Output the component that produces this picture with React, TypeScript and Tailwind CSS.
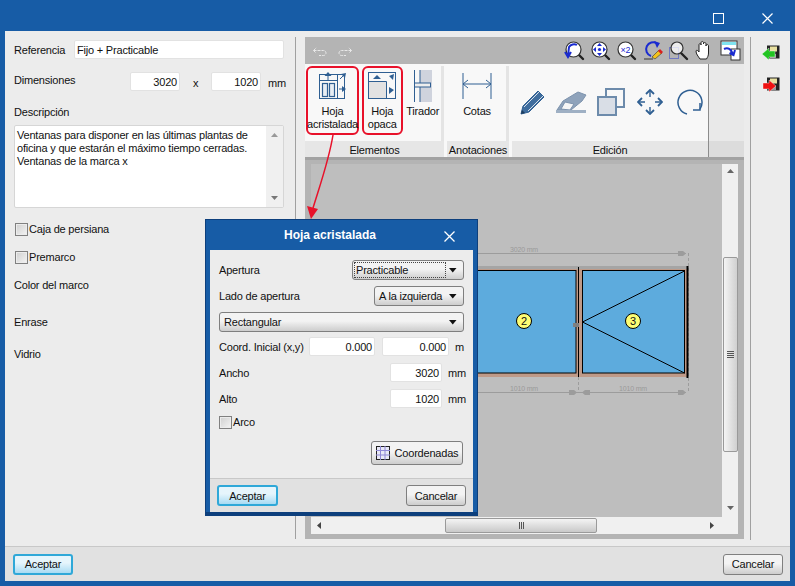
import type { ReactNode } from "react";

const font = "font-['Liberation_Sans',Arial,sans-serif] text-[11px] tracking-[-0.2px] leading-[14px] text-[#111]";

function Input({ value, className }: { value: string; className: string }) {
  return (
    <div className={"h-[19px] shrink-0 bg-white rounded-[2px] border border-[#e2e2e2] flex items-center px-[2px] " + className}>
      {value}
    </div>
  );
}

function Check({ label, className = "" }: { label: string; className?: string }) {
  return (
    <div className={"flex items-center gap-[1px] h-[14px] " + className}>
      <div className="w-[13px] h-[13px] border border-[#808080] bg-gradient-to-br from-[#cfcfcf] to-[#f4f4f4] outline outline-1 -outline-offset-2 outline-[#ececec]" />
      <span>{label}</span>
    </div>
  );
}

function Combo({ value, className, focus }: { value: string; className: string; focus?: boolean }) {
  return (
    <div className={"h-[20px] rounded-[3px] border border-[#7f7f7f] bg-gradient-to-b from-[#f3f3f3] from-45% to-[#cdcdcd] flex items-center pr-[6px] justify-between " + (focus ? "pl-[1px] " : "pl-[3px] ") + className}>
      <span className={focus ? "w-[92px] h-[16px] leading-[14px] pl-[1px] border border-dotted border-[#444]" : "pl-[1px] whitespace-nowrap"}>{value}</span>
      <svg width="8" height="5" viewBox="0 0 8 5"><path d="M0 0h7.5L3.75 4.5z" fill="#111" /></svg>
    </div>
  );
}

function Btn({ children, className, primary }: { children: ReactNode; className: string; primary?: boolean }) {
  return (
    <div
      className={
        "flex items-center justify-center rounded-[3px] " +
        (primary
          ? "border-2 border-[#2fa8d8] bg-gradient-to-b from-[#e6f5fc] from-40% to-[#a8dbf3] "
          : "border border-[#7f7f7f] bg-gradient-to-b from-[#f3f3f3] from-45% to-[#cdcdcd] ") +
        className
      }
    >
      {children}
    </div>
  );
}

function RibbonBtn({ icon, label, className = "" }: { icon: ReactNode; label: ReactNode; className?: string }) {
  return (
    <div className={"h-[69px] flex flex-col items-center text-center " + className}>
      <div className="h-[35px] flex items-center justify-center">{icon}</div>
      <div className="pt-[2px] leading-[13px]">{label}</div>
    </div>
  );
}

// small magnifier used by most of the toolbar icons
function Lens({ children }: { children?: ReactNode }) {
  return (
    <svg width="21" height="21" viewBox="0 0 21 21">
      <path d="M14 14l5 5" stroke="#222" strokeWidth="2.4" strokeLinecap="round" />
      <circle cx="9.5" cy="9.5" r="7.5" fill="#fff" stroke="#333" strokeWidth="1.2" />
      {children}
    </svg>
  );
}

function Toolbar() {
  return (
    <div className="h-[27px] flex items-center pl-[7px] pr-[3px]">
      <svg width="16" height="12" viewBox="0 0 16 12" fill="none" stroke="#e8e8e8" strokeWidth="1">
        <path d="M1.5 5.5h10a2.5 2.5 0 010 5H7M1.5 5.5l3-3M1.5 5.5l2 2" strokeDasharray="3 1" />
      </svg>
      <svg className="ml-[9px]" width="16" height="12" viewBox="0 0 16 12" fill="none" stroke="#e8e8e8" strokeWidth="1">
        <path d="M14.5 5.5h-10a2.5 2.5 0 000 5H9M14.5 5.5l-3-3M14.5 5.5l-2 2" strokeDasharray="3 1" />
      </svg>
      <div className="flex-1" />
      <div className="flex items-center gap-[5px]">
        <Lens><path d="M13 5a6 6 0 00-8 2l-1 9M1 12l3 5 3-5" fill="none" stroke="#1a2bd0" strokeWidth="2" /></Lens>
        <Lens><path d="M9.5 3l2.5 3H7zM9.5 16l2.5-3H7zM3 9.5l3-2.5v5zM16 9.5l-3-2.5v5z" fill="#1a2bd0" /><circle cx="9.5" cy="9.5" r="1.6" fill="#1a2bd0" /></Lens>
        <Lens><text x="9.5" y="13" textAnchor="middle" fontSize="9" fontFamily="Liberation Sans" fill="#1a2bd0">×2</text></Lens>
        <svg width="21" height="21" viewBox="0 0 21 21">
          <path d="M15 3.5A7 7 0 1 0 9 16" fill="none" stroke="#1a2bd0" strokeWidth="2" />
          <path d="M12 1l6 2-3 5z" fill="#1a2bd0" />
          <path d="M2 19h9" stroke="#333" />
          <path d="M10 17l7-7 3 3-7 6z" fill="#f3c21c" stroke="#333" strokeWidth="0.6" />
          <path d="M16 11l2-2 3 3-2 2z" fill="#d92020" />
        </svg>
        <svg width="21" height="21" viewBox="0 0 21 21">
          <path d="M1.5 7.5h9v11h-9z" fill="none" stroke="#2c3fd0" strokeDasharray="1 1" />
          <path d="M13 13l6 6" stroke="#222" strokeWidth="2.4" strokeLinecap="round" />
          <circle cx="9" cy="8" r="6" fill="#fff" fillOpacity="0.75" stroke="#333" strokeWidth="1.2" />
        </svg>
        <svg width="21" height="21" viewBox="0 0 21 21">
          <path d="M6 19c-2-3-4-5-4-8 0-1 2-1 3 1V5c0-2 2-2 2 0V3c0-2 2.5-2 2.5 0v1c0-2 2.5-2 2.5 0v2c0-2 2.5-2 2.5 0v7c0 3-1 4-2 6z" fill="#fff" stroke="#222" strokeWidth="1" />
        </svg>
        <svg width="21" height="21" viewBox="0 0 21 21">
          <rect x="1" y="1" width="16" height="14" fill="#fff" stroke="#333" />
          <rect x="2" y="2" width="14" height="3" fill="#7fe3f0" />
          <rect x="11" y="9" width="9" height="11" fill="#fff" stroke="#333" />
          <path d="M4 9c4-2 7 0 9 5M15 10l-1.5 5-4-2" fill="none" stroke="#1a2bd0" strokeWidth="2" />
        </svg>
      </div>
    </div>
  );
}

function Ribbon() {
  const blue = "#2f5f92";
  return (
    <div className="h-[96px] flex border-b-[3px] border-[#a2a2a2]">
      <div className="w-[404px] bg-[#f8f8f8] border-r border-[#8c8c8c] flex flex-col">
        <div className="h-[77px] flex pt-[2px]">
          <div className="w-[139px] flex pl-[1px] border-r-[3px] border-[#e4e4e4]">
            <RibbonBtn
              className="w-[53px] border-2 border-[#e8112a] rounded-[6px]"
              label={<>Hoja<br />acristalada</>}
              icon={
                <svg width="28" height="27" viewBox="0 0 28 27" fill="none" stroke={blue}>
                  <rect x="0.5" y="2.5" width="25" height="24" strokeWidth="1" />
                  <path d="M0 8.5h18M18.5 2v25" strokeWidth="1" />
                  <rect x="3.5" y="11.5" width="5" height="13" fill="#e8eef4" strokeWidth="1.2" />
                  <rect x="10.5" y="11.5" width="5" height="13" fill="#e8eef4" strokeWidth="1.2" />
                  <path d="M9 0l3.5 4h-7zM27 17l-4 3v-6zM27 1l-1 5-4-4z" fill={blue} stroke="none" />
                  <path d="M9 3v5M20 17h5M21 7l4-4" strokeWidth="1" />
                </svg>
              }
            />
            <RibbonBtn
              className="w-[42px] ml-[3px] border-2 border-[#e8112a] rounded-[6px]"
              label={<>Hoja<br />opaca</>}
              icon={
                <svg width="28" height="27" viewBox="0 0 28 27" fill="none" stroke={blue}>
                  <rect x="0.5" y="0.5" width="27" height="26" strokeWidth="1" />
                  <rect x="1" y="10" width="17" height="16" fill="#e2e2e2" stroke="none" />
                  <path d="M0 9.5h18.5V27" strokeWidth="1" />
                  <path d="M9 3l4 4H5zM26 18l-5 4v-7zM26 2l-1 6-4-4z" fill={blue} stroke="none" />
                </svg>
              }
            />
            <RibbonBtn
              className="w-[38px] ml-[2px] pt-[2px]"
              label="Tirador"
              icon={
                <svg width="21" height="32" viewBox="0 0 21 32">
                  <rect x="8" y="0" width="12" height="32" fill="#cfd3dd" />
                  <path d="M2.5 0v32M8 0v32" stroke="#2f5f92" strokeWidth="1" />
                  <rect x="2.5" y="13" width="16" height="4" fill="#eee" stroke="#2f5f92" />
                </svg>
              }
            />
          </div>
          <div className="w-[65px] flex justify-center border-r-[3px] border-[#e4e4e4]">
            <RibbonBtn
              className="w-full pt-[2px] pl-[4px]"
              label="Cotas"
              icon={
                <svg width="30" height="26" viewBox="0 0 30 26" fill="none" stroke={blue} strokeWidth="1">
                  <path d="M1 0v26M29 0v26M1 11h28M6 7l-5 4 5 4M24 7l5 4-5 4" />
                </svg>
              }
            />
          </div>
          <div className="flex-1 flex items-center pl-[11px] pb-[3px]">
            <svg width="26" height="26" viewBox="0 0 26 26">
              <path d="M1 25l2-8L18 2l6 6L9 23z" fill="#3f6d9e" stroke="#2f5f92" />
              <path d="M4 18l15-15M8 22L23 7" stroke="#fff" strokeWidth="0.8" />
              <path d="M1 25l1-4 3 3z" fill="#1d3d5f" />
            </svg>
            <svg className="ml-[10px]" width="31" height="22" viewBox="0 0 31 22">
              <path d="M1 19l6-9L22 1l8 3-4 6-11 9z" fill="#8fa3bb" stroke="#7d93ad" />
              <path d="M5 18l4-7 9 2-4 6z" fill="#f6f6f6" stroke="#7d93ad" />
              <rect x="0" y="19" width="30" height="3" fill="#9fb0c4" />
            </svg>
            <svg className="ml-[10px]" width="28" height="28" viewBox="0 0 28 28" fill="none" stroke="#6d8bab" strokeWidth="2">
              <rect x="9" y="1" width="18" height="18" />
              <rect x="1" y="9" width="18" height="18" fill="#d9dee6" />
            </svg>
            <svg className="ml-[12px]" width="26" height="26" viewBox="0 0 26 26" fill="none" stroke={blue} strokeWidth="1.4">
              <path d="M13 1v7M13 18v7M1 13h7M18 13h7" />
              <path d="M9 5l4-4 4 4M9 21l4 4 4-4M5 9l-4 4 4 4M21 9l4 4-4 4" strokeWidth="1.8" />
            </svg>
            <svg className="ml-[13px]" width="27" height="26" viewBox="0 0 27 26" fill="none" stroke={blue} strokeWidth="1.5">
              <path d="M11 25A12 12 0 1 1 24 20" />
              <path d="M24 14v7h-7" />
            </svg>
          </div>
        </div>
        <div className="h-[16px] flex text-center leading-[18px]">
          <div className="w-[139px] bg-[#e6e6e6] mr-[3px]">Elementos</div>
          <div className="w-[62px] bg-[#e6e6e6] mr-[3px] whitespace-nowrap">Anotaciones</div>
          <div className="flex-1 bg-[#e6e6e6]">Edición</div>
        </div>
      </div>
      <div className="flex-1 bg-[#e9e9e9] flex flex-col justify-end">
        <div className="h-[16px] bg-[#dcdcdc]" />
      </div>
    </div>
  );
}

function Canvas() {
  const dim = "#9c9c9c";
  return (
    <svg className="flex-1 block min-w-0 bg-[#bebebe]" width="411" height="353" viewBox="311 164 411 353">
      <g stroke={dim} fill="none">
        <path d="M372 253.5h314M372 392.5h314" />
        <path d="M578.5 377v15M688.5 253v139" strokeDasharray="3 2" />
      </g>
      <g fill={dim}>
        <path d="M678 251h5l3 2.5-3 2.5h-5zM569 390h5l3 2.5-3 2.5h-5zM678 390h5l3 2.5-3 2.5h-5zM590 390h-5l-3 2.5 3 2.5h5z" />
      </g>
      <g fontFamily="Liberation Sans" fontSize="7" fill="#9a9a9a" textAnchor="middle">
        <text x="524" y="252">3020 mm</text>
        <text x="524" y="391">1010 mm</text>
        <text x="633" y="391">1010 mm</text>
      </g>
      <rect x="372" y="266" width="316" height="111" fill="#bf9a88" />
      <rect x="372" y="266" width="316" height="3" fill="#a5a5a5" />
      <rect x="372" y="270.5" width="204" height="102.5" fill="#5dabdd" stroke="#000" />
      <rect x="582.5" y="270.5" width="102" height="102.5" fill="#5dabdd" stroke="#000" />
      <path d="M578.5 267v110" stroke="#000" />
      <path d="M687.5 266v112" stroke="#000" strokeWidth="2" />
      <path d="M582.5 322L684.5 271M582.5 322L684.5 373" stroke="#000" />
      <rect x="573" y="323" width="6" height="4" fill="#808080" />
      <circle cx="524" cy="321" r="7.5" fill="#fdfd74" stroke="#000" />
      <circle cx="633" cy="321" r="7.5" fill="#fdfd74" stroke="#000" />
      <g fontFamily="Liberation Sans" fontSize="11" fill="#111" textAnchor="middle">
        <text x="524" y="325">2</text>
        <text x="633" y="325">3</text>
      </g>
    </svg>
  );
}

function ScrollV() {
  return (
    <div className="w-[16px] bg-[#f0f0f0] flex flex-col items-center">
      <svg className="mt-[5px]" width="7" height="4" viewBox="0 0 7 4"><path d="M3.5 0L7 4H0z" fill="#666" /></svg>
      <div className="mt-[84px] w-[15px] h-[195px] shrink-0 border border-[#9a9a9a] rounded-[2px] bg-gradient-to-r from-[#f4f4f4] to-[#d0d0d0] flex flex-col items-center justify-center gap-[1px]">
        <div className="w-[7px] h-[1px] bg-[#555]" />
        <div className="w-[7px] h-[1px] bg-[#555]" />
        <div className="w-[7px] h-[1px] bg-[#555]" />
        <div className="w-[7px] h-[1px] bg-[#555]" />
      </div>
      <svg className="mt-[54px]" width="7" height="4" viewBox="0 0 7 4"><path d="M3.5 4L7 0H0z" fill="#666" /></svg>
    </div>
  );
}

function ScrollH() {
  return (
    <div className="h-[17px] shrink-0 bg-[#f0f0f0] flex items-center">
      <svg className="ml-[6px]" width="4" height="7" viewBox="0 0 4 7"><path d="M0 3.5L4 0v7z" fill="#444" /></svg>
      <div className="ml-[124px] w-[152px] h-[15px] border border-[#9a9a9a] rounded-[2px] bg-gradient-to-b from-[#f4f4f4] to-[#c9c9c9] flex items-center justify-center gap-[1px]">
        <div className="w-[1px] h-[7px] bg-[#555]" />
        <div className="w-[1px] h-[7px] bg-[#555]" />
        <div className="w-[1px] h-[7px] bg-[#555]" />
      </div>
      <svg className="ml-[113px]" width="4" height="7" viewBox="0 0 4 7"><path d="M4 3.5L0 0v7z" fill="#444" /></svg>
    </div>
  );
}

function Dialog() {
  return (
    <div className="absolute left-[205px] top-[219px] w-[273px] h-[297px] bg-[#175ca6] border border-[#0d3f7c] border-b-[4px] px-[4px] flex flex-col">
      <div className="h-[30px] shrink-0 relative flex items-center justify-center text-white font-bold text-[12px] tracking-normal pr-[23px]">
        Hoja acristalada
        <svg className="absolute right-[18px] top-[11px]" width="11" height="11" viewBox="0 0 11 11" stroke="#fff" strokeWidth="1.3">
          <path d="M0.5 0.5l10 10M10.5 0.5l-10 10" />
        </svg>
      </div>
      <div className="flex-1 bg-[#ececec] flex flex-col px-[9px] pt-[10px]">
        <div className="flex items-center justify-between">
          <span>Apertura</span>
          <Combo value="Practicable" focus className="w-[112px]" />
        </div>
        <div className="flex items-center justify-between mt-[6px]">
          <span>Lado de apertura</span>
          <Combo value="A la izquierda" className="w-[90px]" />
        </div>
        <Combo value="Rectangular" className="mt-[6px] w-[245px]" />
        <div className="flex items-center mt-[5px]">
          <span className="w-[91px] whitespace-nowrap">Coord. Inicial (x,y)</span>
          <Input value="0.000" className="w-[66px] justify-end" />
          <Input value="0.000" className="ml-[7px] w-[67px] justify-end" />
          <span className="ml-[6px]">m</span>
        </div>
        <div className="flex items-center mt-[7px]">
          <span className="flex-1">Ancho</span>
          <Input value="3020" className="w-[52px] justify-end" />
          <span className="ml-[6px] w-[16px]">mm</span>
        </div>
        <div className="flex items-center mt-[7px]">
          <span className="flex-1">Alto</span>
          <Input value="1020" className="w-[52px] justify-end" />
          <span className="ml-[6px] w-[16px]">mm</span>
        </div>
        <Check label="Arco" className="mt-[7px]" />
        <div className="flex justify-end mt-[12px] pr-[1px]">
          <Btn className="w-[92px] h-[24px] gap-[5px]">
            <svg width="14" height="14" viewBox="0 0 14 14" fill="#e8e8f8" stroke="#8f88d8" strokeWidth="1">
              <rect x="0.5" y="0.5" width="13" height="13" stroke="#222" />
              <path d="M0 4.5h14M0 9h14M4.5 0v14M9 0v14" />
            </svg>
            Coordenadas
          </Btn>
        </div>
      </div>
      <div className="h-[34px] shrink-0 bg-[#e1e1e1] border-t border-[#c8c8c8] flex items-center justify-between px-[7px]">
        <Btn primary className="w-[61px] h-[21px]">Aceptar</Btn>
        <Btn className="w-[60px] h-[21px]">Cancelar</Btn>
      </div>
    </div>
  );
}

export default function App() {
  return (
    <div className={"relative w-[795px] h-[586px] bg-[#175ca6] px-[5px] pb-[5px] flex flex-col overflow-hidden " + font}>
      <div className="h-[31px] shrink-0 flex items-start justify-end pt-[13px] pr-[17px] gap-[38px]">
        <div className="w-[11px] h-[11px] border border-white" />
        <svg width="11" height="11" viewBox="0 0 11 11" stroke="#fff" strokeWidth="1.2">
          <path d="M0.5 0.5l10 10M10.5 0.5l-10 10" />
        </svg>
      </div>

      <div className="h-[515px] shrink-0 bg-[#ececec] flex">
        <div className="w-[291px] h-[502px] mt-[6px] border-r border-[#a0a0a0] pl-[9px] pr-[11px] pt-[3px] flex flex-col">
          <div className="flex items-center justify-between">
            <span>Referencia</span>
            <Input value="Fijo + Practicable" className="w-[210px]" />
          </div>
          <div className="flex items-center mt-[13px]">
            <span className="w-[116px] shrink-0 -mt-[3px]">Dimensiones</span>
            <Input value="3020" className="w-[50px] justify-end" />
            <span className="ml-[13px] w-[18px] shrink-0 mt-[2px]">x</span>
            <Input value="1020" className="w-[50px] justify-end" />
            <span className="ml-[7px] mt-[2px] whitespace-nowrap">mm</span>
          </div>
          <div className="mt-[14px] h-[14px]">Descripción</div>
          <div className="mt-[6px] h-[83px] shrink-0 bg-white rounded-[2px] border border-[#d6d6d6] flex">
            <div className="flex-1 pl-[2px] pt-[3px] leading-[13px] whitespace-nowrap">
              Ventanas para disponer en las últimas plantas de<br />
              oficina y que estarán el máximo tiempo cerradas.<br />
              Ventanas de la marca x
            </div>
            <div className="w-[17px] bg-[#f0f0f0] flex flex-col items-center justify-between py-[7px]">
              <svg width="7" height="4" viewBox="0 0 7 4"><path d="M3.5 0L7 4H0z" fill="#999" /></svg>
              <svg width="7" height="4" viewBox="0 0 7 4"><path d="M3.5 4L7 0H0z" fill="#777" /></svg>
            </div>
          </div>
          <Check label="Caja de persiana" className="mt-[14px] ml-[1px]" />
          <Check label="Premarco" className="mt-[14px] ml-[1px]" />
          <div className="mt-[14px]">Color del marco</div>
          <div className="mt-[23px]">Enrase</div>
          <div className="mt-[18px]">Vidrio</div>
        </div>

        <div className="w-[439px] h-[502px] mt-[6px] ml-[9px] shrink-0 bg-[#b4b4b4] flex flex-col">
          <Toolbar />
          <Ribbon />
          <div className="flex-1 flex flex-col px-[6px] pt-[4px] pb-[5px] min-h-0">
            <div className="flex-1 flex min-h-0">
              <Canvas />
              <ScrollV />
            </div>
            <ScrollH />
          </div>
        </div>

        <div className="w-[6px] shrink-0" />
        <div className="h-[503px] mt-[6px] flex-1 border-l border-[#a0a0a0] flex flex-col items-center pt-[8px] gap-[15px]">
          <svg width="18" height="17" viewBox="0 0 18 17">
            <rect x="5" y="0.5" width="12.5" height="13" fill="#222" />
            <rect x="8" y="1.5" width="7" height="5" fill="#e8e0a0" />
            <rect x="8" y="9" width="6" height="4" fill="#999" />
            <path d="M0 9l7-6v3h6v6H7v3z" fill="#22c422" stroke="#fff" strokeWidth="0.4" />
          </svg>
          <svg width="18" height="17" viewBox="0 0 18 17">
            <rect x="5" y="0.5" width="12.5" height="13" fill="#222" />
            <rect x="8" y="1.5" width="7" height="5" fill="#e8e0a0" />
            <rect x="8" y="9" width="6" height="4" fill="#999" />
            <path d="M14 9L7 3v3H1v6h6v3z" fill="#ee1111" stroke="#fff" strokeWidth="0.4" />
          </svg>
        </div>
      </div>

      <div className="h-[35px] shrink-0 bg-[#e1e1e1] border-t border-[#c8c8c8] flex items-center justify-between pl-[8px] pr-[7px]">
        <Btn primary className="w-[60px] h-[21px]">Aceptar</Btn>
        <Btn className="w-[60px] h-[21px]">Cancelar</Btn>
      </div>

      <Dialog />

      {/* red arrow from the button to the dialog */}
      <svg className="absolute left-[300px] top-[130px]" width="40" height="92" viewBox="0 0 40 92">
        <path d="M33 5C29 30 20 55 13 78" fill="none" stroke="#e8112a" strokeWidth="1.5" />
        <path d="M7 76l11 3-7 10z" fill="#e8112a" />
      </svg>
    </div>
  );
}
